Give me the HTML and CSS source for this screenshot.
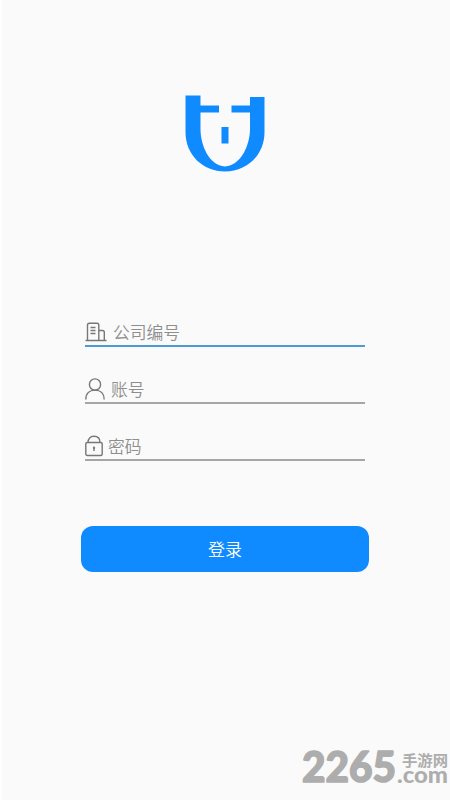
FILE: index.html
```html
<!DOCTYPE html>
<html lang="zh-CN">
<head>
<meta charset="utf-8">
<title>登录</title>
<link rel="stylesheet" href="styles.css">
</head>
<body>
<main class="login">
  <svg class="logo" viewBox="0 0 80 78" aria-hidden="true">
    <path fill="#108bff" fill-rule="evenodd" d="M.5.5H15.500V10.500H34V17.500H15.500V34C15.500 50 24 70.500 40 71.500C56 70.500 65 50 65 34V17.500H46.500V10.500H65V2H79.500V37C79.500 60 62 76.500 40 76.500S.5 60 .5 37Z"/>
    <path fill="#108bff" d="M36.500 32H43.500V48.500H36.500Z"/>
  </svg>
  <form class="form">
    <label class="field field-active">
      <svg class="icon icon-company" viewBox="0 0 22 20" aria-hidden="true">
        <path d="M2.500 18V3Q2.500 1.200 4.300 1.200H12Q13.800 1.200 13.800 3V18M13.800 8.500H17.500Q19.300 8.500 19.300 10.300V18M.5 18.500H21.500M5.500 5.500H10.500M5.500 8.500H10.500M5.500 11.500H10.500"/>
      </svg>
      <span>公司编号</span>
    </label>
    <label class="field">
      <svg class="icon icon-user" viewBox="0 0 20 22" aria-hidden="true">
        <circle cx="10" cy="6.500" r="5.600"/>
        <path d="M.8 21.500C.8 15.500 4.500 12.100 10 12.100S19.200 15.500 19.200 21.500"/>
      </svg>
      <span>账号</span>
    </label>
    <label class="field">
      <svg class="icon icon-lock" viewBox="0 0 18 22" aria-hidden="true">
        <rect x=".8" y="7.500" width="16.400" height="13" rx="1.500"/>
        <path d="M3 7.500C3 3.500 5.300 1.300 9 1.300S15 3.500 15 7.500M9 13V16"/>
        <circle cx="9" cy="12.800" r=".5"/>
      </svg>
      <span>密码</span>
    </label>
    <button class="submit" type="button">登录</button>
  </form>
</main>
<svg class="watermark" viewBox="0 0 158 60">
  <text class="mark-number" x="10" y="42" textLength="94" lengthAdjust="spacingAndGlyphs">2265</text>
  <text class="mark-name" x="110" y="26" textLength="46" lengthAdjust="spacingAndGlyphs">手游网</text>
  <text class="mark-domain" x="105" y="42.500" textLength="51" lengthAdjust="spacingAndGlyphs">.com</text>
</svg>
</body>
</html>
```
FILE: styles.css
```css
* { box-sizing: border-box; }
body {
  margin: 0;
  height: 800px;
  overflow: hidden;
  background: #fafafa;
  border-left: 2px solid #fff;
  font-family: "Noto Sans CJK SC", sans-serif;
}
.login {
  display: flex;
  flex-direction: column;
  align-items: center;
  padding-top: 95px;
}
.logo { width: 80px; height: 78px; margin-right: 2px; }
.form {
  display: flex;
  flex-direction: column;
  align-items: center;
  width: 288px;
  margin-top: 144px;
  margin-right: 2px;
}
.field {
  display: flex;
  align-items: center;
  width: 280px;
  height: 30px;
  margin-bottom: 27px;
  padding-top: 2px;
  border-bottom: 2px solid #a6a6a6;
  color: #8e8e8e;
  font-size: 16.800px;
  font-weight: 350;
  line-height: 26px;
}
.field-active { border-bottom-color: #4e9bd3; }
.icon {
  flex: none;
  fill: none;
  stroke: #777;
  stroke-width: 1.400;
}
.icon-company { width: 22px; height: 20px; margin-right: 6px; }
.icon-user { width: 20px; height: 22px; margin-right: 6px; }
.icon-lock { width: 18px; height: 22px; margin-right: 5px; }
.submit {
  width: 288px;
  height: 46px;
  margin-top: 38px;
  padding: 0;
  border: 0;
  border-radius: 12px;
  background: #108bff;
  color: #fff;
  font: 350 17px/46px "Noto Sans CJK SC", sans-serif;
}
.watermark {
  position: absolute;
  left: 292px;
  top: 740px;
  width: 158px;
  height: 60px;
  fill: #adadad;
}
.mark-number {
  font: 900 42px Lato, sans-serif;
  stroke: #adadad;
  stroke-width: 1.500;
  stroke-linejoin: round;
}
.mark-name { font: 700 15px "Noto Sans CJK SC", sans-serif; }
.mark-domain { font: 900 23px Lato, sans-serif; }
```
